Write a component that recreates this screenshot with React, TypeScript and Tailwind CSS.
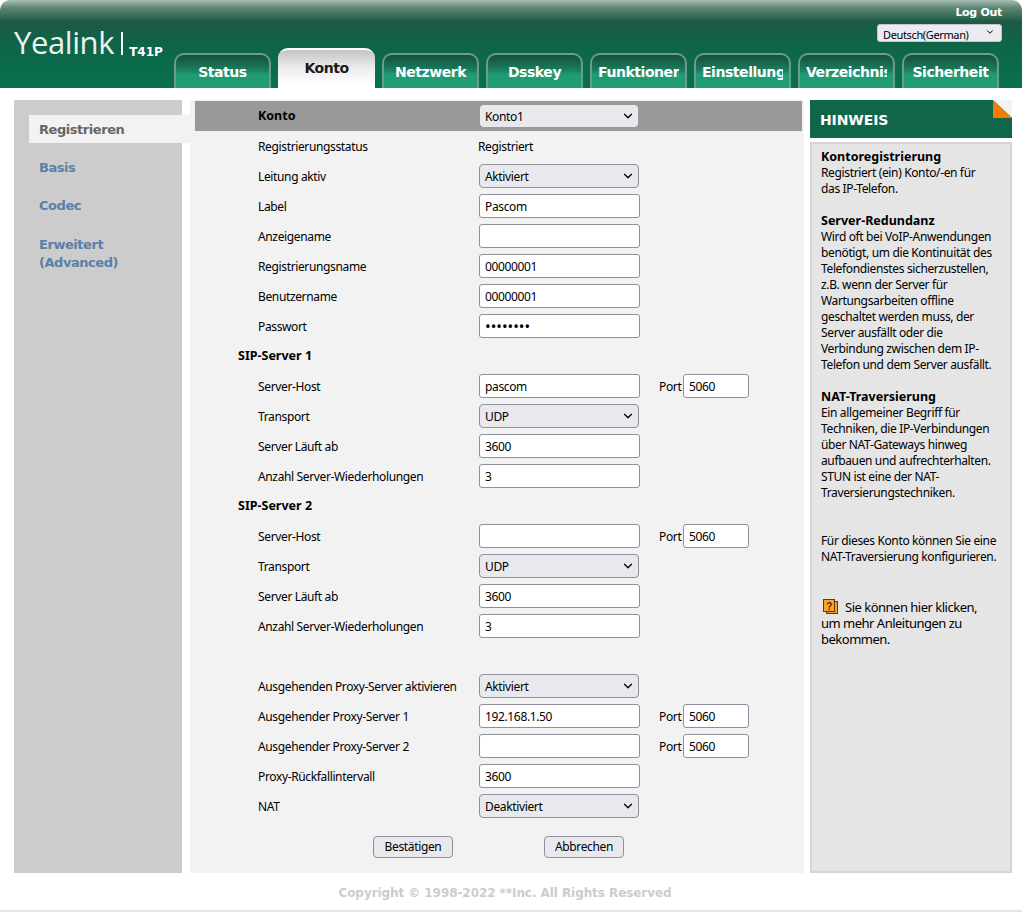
import { ChevronDown } from "lucide-react";

const body = "font-['Noto_Sans','Liberation_Sans',sans-serif]";
const bold = "font-['DejaVu_Sans','Liberation_Sans',sans-serif] font-bold tracking-normal";
const strong = "text-[12.5px] font-bold tracking-normal";

const tabs = ["Status", "Konto", "Netzwerk", "Dsskey", "Funktionen", "Einstellung", "Verzeichnis", "Sicherheit"];

const Select = ({ value }: { value: string }) => (
  <div className="relative flex h-[24px] w-[160px] items-center rounded-[4px] border border-[#8f8f9d] bg-[#e9e9ed] pl-[5px]">
    <span className="translate-y-[1px]">{value}</span>
    <ChevronDown className="absolute right-[3px] top-[4px] h-[14px] w-[14px] text-black" strokeWidth={2.2} />
  </div>
);

const Input = ({ value, w = "w-[161px]", dots }: { value?: string; w?: string; dots?: boolean }) => (
  <div className={`flex h-[24px] items-center rounded-[3px] border border-[#8f8f9d] bg-white pl-[5px] ${w}`}>
    <span className={dots ? "text-[15px] tracking-normal" : "translate-y-[1px]"}>{value}</span>
  </div>
);

const Row = ({ label, children, port }: { label: string; children?: React.ReactNode; port?: boolean }) => (
  <div className="flex h-[30px] items-center">
    <div className="w-[221px] shrink-0 translate-y-[1px]">{label}</div>
    {children}
    {port && (
      <div className="ml-[19px] flex items-center gap-[3px]">
        <span className="w-[21px] translate-y-[1px] whitespace-nowrap">Port</span>
        <Input value="5060" w="w-[66px]" />
      </div>
    )}
  </div>
);

const Section = ({ title }: { title: string }) => (
  <div className={`-ml-[20px] flex h-[30px] items-center ${strong}`}>{title}</div>
);

const HintTitle = ({ children, className = "" }: { children: React.ReactNode; className?: string }) => (
  <div className={`${strong} ${className}`}>{children}</div>
);

export default function App() {
  return (
    <div className={`h-[912px] w-[1022px] overflow-hidden bg-white text-[12px] leading-[16px] tracking-[-0.36px] text-black ${body}`}>
      {/* header */}
      <div className="flex h-[88px] flex-col rounded-t-[10px] bg-[linear-gradient(180deg,#a9bdb2_0px,#5d8572_8px,#1d5a45_22px,#0f6347_40px,#07724f_88px)] px-[14px]">
        <div className="flex h-[48px] justify-between">
          <div className="flex items-start pt-[27px]">
            <span className="font-['Open_Sans',sans-serif] text-[31px] font-medium leading-[30px] tracking-[-0.4px] text-[#eef3ef]">Yealink</span>
            <span className="ml-[7px] mt-[5px] h-[23px] w-[2px] bg-white" />
            <span className={`ml-[6px] mt-[19px] text-[12px] leading-[12px] text-white ${bold}`}>T41P</span>
          </div>
          <div className="mr-[6px] flex flex-col items-end pt-[6px]">
            <span className={`text-[11px] leading-[14px] !tracking-[-0.3px] text-white ${bold}`}>Log Out</span>
            <div className="relative mt-[4px] flex h-[18px] w-[125px] items-center overflow-hidden rounded-[3px] border border-[#c4c4cc] bg-[#ecebf1] pl-[5px] text-[11px]">
              <span className="translate-y-[2px]">Deutsch(German)</span>
              <ChevronDown className="absolute right-[6px] top-[2px] h-[10px] w-[10px]" strokeWidth={2.4} />
            </div>
          </div>
        </div>
        <div className="ml-[160px] flex h-[40px] items-end gap-[7px]">
          {tabs.map((t) =>
            t === "Konto" ? (
              <div key={t} className={`h-[40px] w-[97px] rounded-t-[10px] border-t-2 border-white bg-[linear-gradient(180deg,#c4c4c4_0px,#ececec_18px,#fff_34px)] pt-[10px] text-center text-[14px] leading-[16px] !tracking-[-0.5px] text-[#1a1a1a] ${bold}`}>
                {t}
              </div>
            ) : (
              <div key={t} className="h-[35px] w-[97px] rounded-t-[10px] border-x-2 border-t-2 border-[#6d9c8a] bg-[linear-gradient(180deg,#174f3c_0px,#1a7a5c_14px,#209c75_20px,#209c75_35px)] pt-[9px]">
                <div className={`mx-[6px] overflow-hidden whitespace-nowrap text-center text-[14px] leading-[16px] !tracking-[-0.45px] text-white ${bold}`}>{t}</div>
              </div>
            ),
          )}
        </div>
      </div>

      {/* main */}
      <div className="mt-[12px] flex h-[773px] px-[14px]">
        <div className={`h-full w-[168px] shrink-0 bg-[#cccccc] pt-[15px] text-[13px] !tracking-[-0.45px] text-[#5a7fa8] ${bold}`}>
          <div className="ml-[15px] flex h-[28px] w-[161px] items-center bg-[#f2f2f2] pl-[10px] text-[#666666]">
            <span className="translate-y-[1px]">Registrieren</span>
          </div>
          <div className="ml-[25px] mt-[10px] flex h-[28px] items-center">
            <span className="translate-y-[1px]">Basis</span>
          </div>
          <div className="ml-[25px] mt-[10px] flex h-[28px] items-center">
            <span className="translate-y-[1px]">Codec</span>
          </div>
          <div className="ml-[25px] mt-[17px] leading-[18px]">
            Erweitert
            <br />
            (Advanced)
          </div>
        </div>

        <div className="ml-[8px] h-full w-[614px] shrink-0 bg-[#f2f2f2] pt-[1px]">
          <div className="ml-[5px] mr-[2px] flex h-[30px] items-center bg-[#999999] pl-[63px]">
            <div className={`w-[222px] shrink-0 ${strong}`}>Konto</div>
            <div className="relative flex h-[22px] w-[158px] items-center rounded-[4px] bg-[#e9e9ed] pl-[5px]">
              <span className="translate-y-[1px]">Konto1</span>
              <ChevronDown className="absolute right-[3px] top-[4px] h-[14px] w-[14px] text-black" strokeWidth={2.2} />
            </div>
          </div>
          <div className="pl-[68px]">
            <Row label="Registrierungsstatus"><span className="-ml-[1px] translate-y-[1px]">Registriert</span></Row>
            <Row label="Leitung aktiv"><Select value="Aktiviert" /></Row>
            <Row label="Label"><Input value="Pascom" /></Row>
            <Row label="Anzeigename"><Input /></Row>
            <Row label="Registrierungsname"><Input value="00000001" /></Row>
            <Row label="Benutzername"><Input value="00000001" /></Row>
            <Row label="Passwort"><Input value="••••••••" dots /></Row>
            <Section title="SIP-Server 1" />
            <Row label="Server-Host" port><Input value="pascom" /></Row>
            <Row label="Transport"><Select value="UDP" /></Row>
            <Row label="Server Läuft ab"><Input value="3600" /></Row>
            <Row label="Anzahl Server-Wiederholungen"><Input value="3" /></Row>
            <Section title="SIP-Server 2" />
            <Row label="Server-Host" port><Input /></Row>
            <Row label="Transport"><Select value="UDP" /></Row>
            <Row label="Server Läuft ab"><Input value="3600" /></Row>
            <Row label="Anzahl Server-Wiederholungen"><Input value="3" /></Row>
            <div className="h-[30px]" />
            <Row label="Ausgehenden Proxy-Server aktivieren"><Select value="Aktiviert" /></Row>
            <Row label="Ausgehender Proxy-Server 1" port><Input value="192.168.1.50" /></Row>
            <Row label="Ausgehender Proxy-Server 2" port><Input /></Row>
            <Row label="Proxy-Rückfallintervall"><Input value="3600" /></Row>
            <Row label="NAT"><Select value="Deaktiviert" /></Row>
            <div className="mt-[15px] flex pl-[115px]">
              <div className="flex h-[22px] w-[80px] items-center justify-center rounded-[4px] border border-[#8f8f9d] bg-[#e9e9ed]">Bestätigen</div>
              <div className="ml-[91px] flex h-[22px] w-[80px] items-center justify-center rounded-[4px] border border-[#8f8f9d] bg-[#e9e9ed]">Abbrechen</div>
            </div>
          </div>
        </div>

        <div className="ml-[6px] h-full w-[202px] shrink-0">
          <div className="relative flex h-[38px] items-center bg-[#0f6649] pl-[10px]">
            <span className={`translate-y-[1px] text-[14px] !tracking-[-0.1px] text-white ${bold}`}>HINWEIS</span>
            <svg className="absolute right-0 top-0" width="19" height="18" viewBox="0 0 19 18">
              <polygon points="0,0 19,0 19,18" fill="#f2f2f2" />
              <polygon points="0,0 19,18 0,18" fill="#f57c00" />
            </svg>
          </div>
          <div className="mt-[4px] h-[731px] border-2 border-[#d4d4d4] bg-[#e5e5e5] pl-[9px] pt-[5px]">
            <HintTitle>Kontoregistrierung</HintTitle>
            <div>
              Registriert (ein) Konto/-en für
              <br />
              das IP-Telefon.
            </div>
            <HintTitle className="mt-[16px]">Server-Redundanz</HintTitle>
            <div>
              Wird oft bei VoIP-Anwendungen
              <br />
              benötigt, um die Kontinuität des
              <br />
              Telefondienstes sicherzustellen,
              <br />
              z.B. wenn der Server für
              <br />
              Wartungsarbeiten offline
              <br />
              geschaltet werden muss, der
              <br />
              Server ausfällt oder die
              <br />
              Verbindung zwischen dem IP-
              <br />
              Telefon und dem Server ausfällt.
            </div>
            <HintTitle className="mt-[16px]">NAT-Traversierung</HintTitle>
            <div>
              Ein allgemeiner Begriff für
              <br />
              Techniken, die IP-Verbindungen
              <br />
              über NAT-Gateways hinweg
              <br />
              aufbauen und aufrechterhalten.
              <br />
              STUN ist eine der NAT-
              <br />
              Traversierungstechniken.
            </div>
            <div className="mt-[32px]">
              Für dieses Konto können Sie eine
              <br />
              NAT-Traversierung konfigurieren.
            </div>
            <div className="mt-[34px] text-[13px] tracking-[-0.5px]">
              <div className="flex items-center">
                <svg width="15" height="15" viewBox="0 0 15 15" className="ml-[2px] mr-[7px] -translate-y-[1px]">
                  <rect x="3.5" y="2.5" width="11" height="12" fill="#f0a030" stroke="#5c3a10" />
                  <rect x="0.5" y="0.5" width="11" height="12" fill="#f7a32e" stroke="#5c3a10" />
                  <text x="6" y="10.5" textAnchor="middle" fontSize="10" fontWeight="700" fill="#6b1f00" fontFamily="Liberation Sans">?</text>
                </svg>
                Sie können hier klicken,
              </div>
              um mehr Anleitungen zu
              <br />
              bekommen.
            </div>
          </div>
        </div>
      </div>

      <div className={`mt-[12px] pr-[12px] text-center text-[12px] leading-[16px] !tracking-[-0.07px] text-[#cccccc] ${bold}`}>Copyright © 1998-2022 **Inc. All Rights Reserved</div>
      <div className="mt-[9px] h-[3px] bg-[#e5e5e5]" />
    </div>
  );
}
